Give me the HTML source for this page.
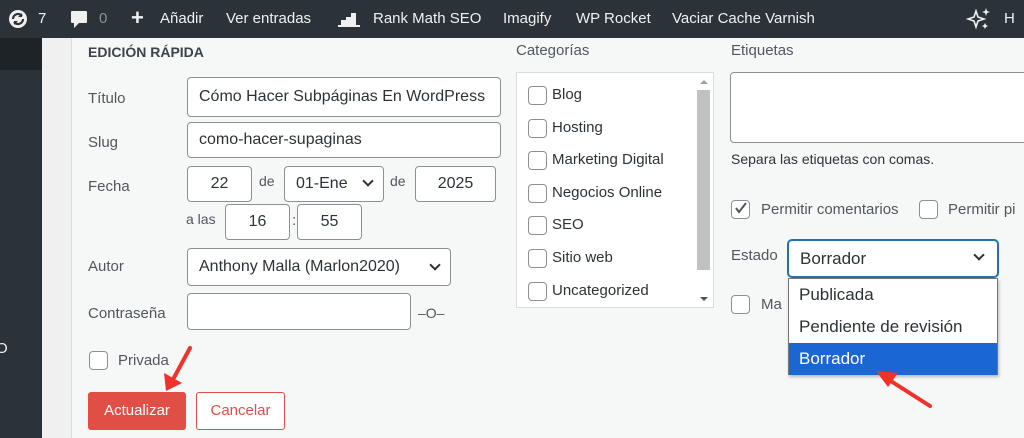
<!DOCTYPE html>
<html><head><meta charset="utf-8"><style>
*{box-sizing:border-box;margin:0;padding:0}
body{width:1024px;height:438px;overflow:hidden;background:#f0f0f1;font-family:"Liberation Sans",sans-serif;color:#3c434a;position:relative;font-size:15px}
.bar{position:absolute;left:0;top:0;width:1024px;height:38px;background:#2c3338;color:#f0f0f1;font-size:15px}
.bar span{position:absolute;top:10px}
.side{position:absolute;left:0;top:38px;width:42px;height:400px;background:#2c3338}
.side .top{position:absolute;left:0;top:0;width:42px;height:32px;background:#1d2327}
.panel{position:absolute;left:71px;top:38px;width:960px;height:400px;background:#f6f7f7;border-left:1px solid #dcdcde}
.a{position:absolute}
.in{position:absolute;background:#fff;border:1px solid #8c8f94;border-radius:4px;color:#2c3338;font-size:16px;padding:0 11px;display:flex;align-items:center;white-space:nowrap;overflow:hidden}
.lbl{position:absolute;font-size:15px;color:#50575e}
.cb{position:absolute;width:19px;height:19px;border:1px solid #8c8f94;border-radius:4px;background:#fff}
.chev{position:absolute;width:8px;height:8px;border-right:2px solid #2c3338;border-bottom:2px solid #2c3338;transform:rotate(45deg)}
</style></head><body>
<div class="bar">
<svg class="a" style="left:8px;top:9px" width="20" height="20" viewBox="0 0 20 20"><circle cx="10" cy="10" r="9" fill="#f0f0f1"/><path d="M5 10a5 5 0 0 1 9-3M15 10a5 5 0 0 1-9 3" stroke="#2c3338" stroke-width="2.2" fill="none"/><path d="M14 4v4h-4M6 16v-4h4" fill="#2c3338"/></svg>
<span style="left:38px">7</span>
<svg class="a" style="left:70px;top:10px" width="18" height="20" viewBox="0 0 18 20"><path d="M2 1h14a1 1 0 0 1 1 1v10a1 1 0 0 1-1 1H9l-5 5v-5H2a1 1 0 0 1-1-1V2a1 1 0 0 1 1-1z" fill="#f0f0f1"/></svg>
<span style="left:99px;color:#8c8f94">0</span>
<span style="left:131px;font-size:22px;top:5px;font-weight:bold">+</span>
<span style="left:160px">Añadir</span>
<span style="left:226px">Ver entradas</span>
<svg class="a" style="left:337px;top:11px" width="24" height="16" viewBox="0 0 24 16"><path d="M1 15h22M5 14v-4h3v4M10 14V7h3v7M15 14V3h3v11" stroke="#f0f0f1" stroke-width="2" fill="#f0f0f1"/></svg>
<span style="left:373px">Rank Math SEO</span>
<span style="left:503px">Imagify</span>
<span style="left:576px">WP Rocket</span>
<span style="left:672px">Vaciar Cache Varnish</span>
<svg class="a" style="left:966px;top:5px" width="28" height="28" viewBox="0 0 28 28"><path d="M10 6l2 6 6 2-6 2-2 6-2-6-6-2 6-2z" stroke="#f0f0f1" stroke-width="1.6" fill="none"/><path d="M20 3l1 3 3 1-3 1-1 3-1-3-3-1 3-1zM19 18l1 2 2 1-2 1-1 2-1-2-2-1 2-1z" fill="#f0f0f1"/></svg>
<span style="left:1004px">H</span>
</div>
<div class="side"><div class="top"></div><span class="a" style="left:-4px;top:302px;color:#f0f0f1;font-size:15px">O</span></div>
<div class="panel"></div>
<div class="lbl" style="left:88px;top:44px;font-size:14px;font-weight:bold;color:#3c434a">EDICIÓN RÁPIDA</div>
<div class="lbl" style="left:88px;top:90px">Título</div>
<div class="in" style="left:187px;top:77px;width:314px;height:40px">Cómo Hacer Subpáginas En WordPress</div>
<div class="lbl" style="left:88px;top:134px">Slug</div>
<div class="in" style="left:187px;top:122px;width:314px;height:36px">como-hacer-supaginas</div>
<div class="lbl" style="left:88px;top:178px">Fecha</div>
<div class="in" style="left:187px;top:166px;width:65px;height:36px;justify-content:center">22</div>
<div class="lbl" style="left:259px;top:173px;font-size:14px">de</div>
<div class="in" style="left:284px;top:166px;width:100px;height:36px">01-Ene</div><div class="chev" style="left:364px;top:177px"></div>
<div class="lbl" style="left:390px;top:173px;font-size:14px">de</div>
<div class="in" style="left:415px;top:166px;width:81px;height:36px;justify-content:center">2025</div>
<div class="lbl" style="left:186px;top:211px;font-size:14px">a las</div>
<div class="in" style="left:225px;top:204px;width:65px;height:36px;justify-content:center">16</div>
<div class="lbl" style="left:292px;top:212px">:</div>
<div class="in" style="left:297px;top:204px;width:65px;height:36px;justify-content:center">55</div>
<div class="lbl" style="left:88px;top:258px">Autor</div>
<div class="in" style="left:187px;top:248px;width:264px;height:38px">Anthony Malla (Marlon2020)</div><div class="chev" style="left:431px;top:261px;border-color:#2c3338"></div>
<div class="in" style="left:187px;top:293px;width:224px;height:37px"></div>
<div class="lbl" style="left:88px;top:305px">Contraseña</div>
<div class="lbl" style="left:418px;top:305px;font-size:14px">–O–</div>
<div class="cb" style="left:89px;top:351px"></div>
<div class="lbl" style="left:118px;top:352px">Privada</div>
<div class="a" style="left:88px;top:392px;width:98px;height:38px;background:#e04e45;border-radius:3px;color:#fff;font-size:15px;text-align:center;line-height:38px">Actualizar</div>
<div class="a" style="left:196px;top:392px;width:89px;height:38px;border:1px solid #e04e45;border-radius:3px;color:#e04e45;background:#fff;font-size:15px;text-align:center;line-height:36px">Cancelar</div>
<svg class="a" style="left:160px;top:345px" width="40" height="50" viewBox="0 0 40 50"><path d="M30 3L10 40" stroke="#f0322a" stroke-width="4" stroke-linecap="round"/><path d="M6 46L4 28L22 38z" fill="#f0322a"/></svg>
<div class="lbl" style="left:516px;top:42px">Categorías</div>
<div class="a" style="left:516px;top:72px;width:198px;height:236px;background:#fff;border:1px solid #dcdcde"></div>
<div class="a" style="left:697px;top:90px;width:13px;height:180px;background:#c1c1c1"></div>
<div class="a" style="left:700px;top:80px;border:4px solid transparent;border-bottom-color:#a0a0a0;border-top:none;width:0;height:0"></div>
<div class="a" style="left:700px;top:297px;border:4px solid transparent;border-top-color:#505050;border-bottom:none;width:0;height:0"></div>
<div class="cb" style="left:528px;top:86px"></div><div class="lbl" style="left:552px;top:86px;color:#2c3338">Blog</div>
<div class="cb" style="left:528px;top:119px"></div><div class="lbl" style="left:552px;top:119px;color:#2c3338">Hosting</div>
<div class="cb" style="left:528px;top:151px"></div><div class="lbl" style="left:552px;top:151px;color:#2c3338">Marketing Digital</div>
<div class="cb" style="left:528px;top:184px"></div><div class="lbl" style="left:552px;top:184px;color:#2c3338">Negocios Online</div>
<div class="cb" style="left:528px;top:216px"></div><div class="lbl" style="left:552px;top:216px;color:#2c3338">SEO</div>
<div class="cb" style="left:528px;top:249px"></div><div class="lbl" style="left:552px;top:249px;color:#2c3338">Sitio web</div>
<div class="cb" style="left:528px;top:282px"></div><div class="lbl" style="left:552px;top:282px;color:#2c3338">Uncategorized</div>
<div class="lbl" style="left:731px;top:42px">Etiquetas</div>
<div class="a" style="left:730px;top:72px;width:300px;height:71px;background:#fff;border:1px solid #8c8f94;border-radius:4px"></div>
<div class="lbl" style="left:731px;top:151px;font-size:14px;color:#2c3338">Separa las etiquetas con comas.</div>
<div class="cb" style="left:731px;top:200px"></div>
<svg class="a" style="left:733px;top:200px" width="16" height="16" viewBox="0 0 16 16"><path d="M3 8l3 4 7-9" stroke="#50575e" stroke-width="2" fill="none"/></svg>
<div class="lbl" style="left:761px;top:201px">Permitir comentarios</div>
<div class="cb" style="left:919px;top:200px"></div>
<div class="lbl" style="left:948px;top:201px">Permitir pi</div>
<div class="lbl" style="left:731px;top:247px">Estado</div>
<div class="cb" style="left:731px;top:295px"></div>
<div class="lbl" style="left:761px;top:296px">Ma</div>
<div class="in" style="left:788px;top:240px;width:210px;height:37px;border-color:#2271b1;box-shadow:0 0 0 1px #2271b1;color:#2c3338;font-size:17px">Borrador</div><div class="chev" style="left:975px;top:251px"></div>
<div class="a" style="left:788px;top:278px;width:210px;height:97px;background:#fff;border:1px solid #767676;box-shadow:1px 2px 3px rgba(0,0,0,.25);font-size:17px;color:#2c3338">
<div style="height:32px;line-height:32px;padding-left:10px">Publicada</div>
<div style="height:32px;line-height:32px;padding-left:10px">Pendiente de revisión</div>
<div style="height:32px;line-height:32px;padding-left:10px;background:#1a66d2;color:#fff">Borrador</div>
</div>
<svg class="a" style="left:870px;top:362px" width="70" height="50" viewBox="0 0 70 50"><path d="M60 44L16 16" stroke="#f0322a" stroke-width="4" stroke-linecap="round"/><path d="M6 9l22 2-10 14z" fill="#f0322a"/></svg>
</body></html>
